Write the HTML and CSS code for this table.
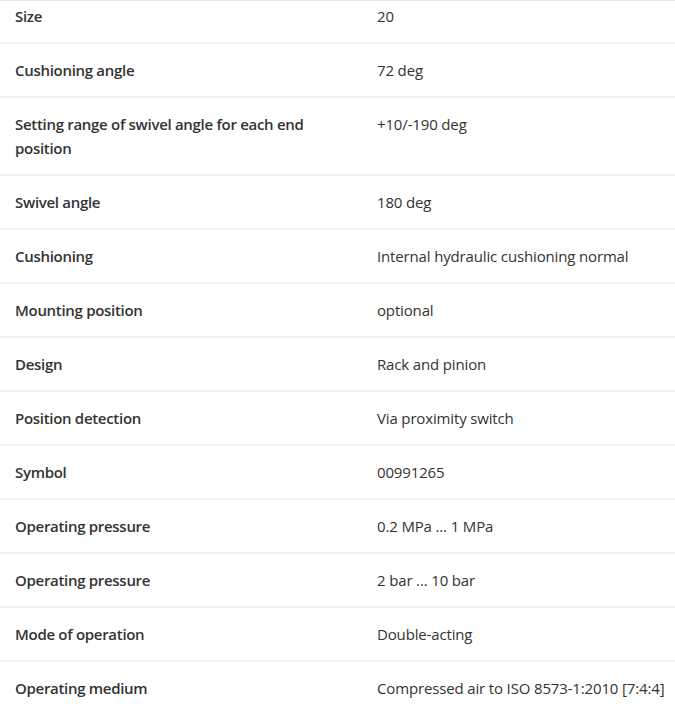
FILE: index.html
```html
<!DOCTYPE html>
<html lang="en">
<head>
<meta charset="utf-8">
<title>Technical data</title>
<link rel="stylesheet" href="styles.css">
</head>
<body>
<div class="viewport">
  <div class="specs">
    <div class="row"><div class="label">Size</div><div class="value">20</div></div>
    <div class="row"><div class="label">Cushioning angle</div><div class="value">72 deg</div></div>
    <div class="row"><div class="label">Setting range of swivel angle for each end position</div><div class="value">+10/-190 deg</div></div>
    <div class="row"><div class="label">Swivel angle</div><div class="value">180 deg</div></div>
    <div class="row"><div class="label">Cushioning</div><div class="value">Internal hydraulic cushioning normal</div></div>
    <div class="row"><div class="label">Mounting position</div><div class="value">optional</div></div>
    <div class="row"><div class="label">Design</div><div class="value">Rack and pinion</div></div>
    <div class="row"><div class="label">Position detection</div><div class="value">Via proximity switch</div></div>
    <div class="row"><div class="label">Symbol</div><div class="value">00991265</div></div>
    <div class="row"><div class="label">Operating pressure</div><div class="value">0.2 MPa ... 1 MPa</div></div>
    <div class="row"><div class="label">Operating pressure</div><div class="value">2 bar ... 10 bar</div></div>
    <div class="row"><div class="label">Mode of operation</div><div class="value">Double-acting</div></div>
    <div class="row"><div class="label">Operating medium</div><div class="value">Compressed air to ISO 8573-1:2010 [7:4:4]</div></div>
  </div>
</div>
</body>
</html>
```
FILE: styles.css
```css
html, body {
  margin: 0;
  padding: 0;
  background: #fff;
}
body {
  font-family: "Open Sans", "Noto Sans", sans-serif;
  font-size: 15px;
  line-height: 24px;
  color: #333;
}
.viewport {
  height: 712px;
  overflow: hidden;
  border-top: 1px solid #e4e7ea;
}
.specs {
  margin-top: -11px;
}
.row {
  display: grid;
  grid-template-columns: 362px 1fr;
  border-bottom: 2px solid #f0f0f0;
}
.label, .value {
  padding: 14px 15px;
}
.label {
  font-weight: 600;
  letter-spacing: -0.3px;
}
.value {
  white-space: nowrap;
  letter-spacing: -0.15px;
}
```
